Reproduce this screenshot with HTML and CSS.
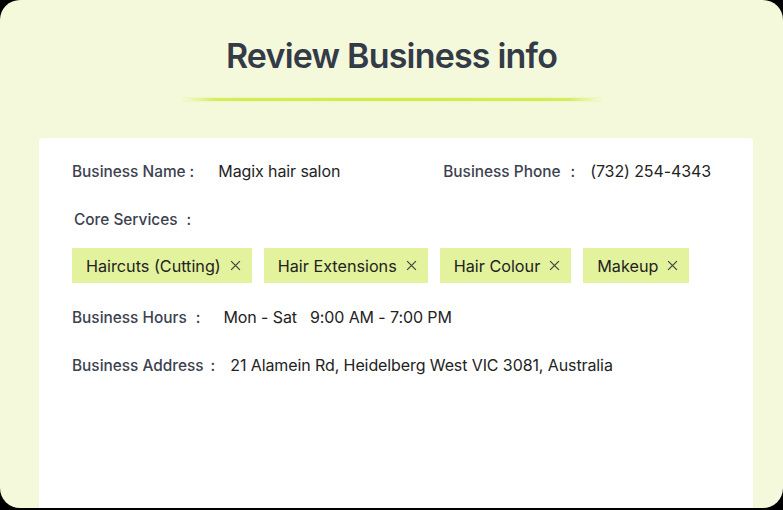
FILE: index.html
```html
<!DOCTYPE html>
<html lang="en">
<head>
<meta charset="utf-8">
<title>Review Business info</title>
<link rel="stylesheet" href="styles.css">
</head>
<body>
<div class="page">
  <h1 class="title">Review Business info</h1>
  <div class="underline"></div>
  <div class="card">
    <div class="row row-first">
      <div class="field field-name">
        <span class="label">Business Name</span><span class="colon colon-name">:</span><span class="value value-name">Magix hair salon</span>
      </div>
      <div class="field field-phone">
        <span class="label">Business Phone</span><span class="colon colon-phone">:</span><span class="value value-phone">(732) 254-4343</span>
      </div>
    </div>
    <div class="row row-services">
      <span class="label label-services">Core Services</span><span class="colon colon-services">:</span>
    </div>
    <div class="tags">
      <span class="tag">Haircuts (Cutting)<svg class="x" viewBox="0 0 10 10"><path d="M1 1L9 9M9 1L1 9"/></svg></span>
      <span class="tag">Hair Extensions<svg class="x" viewBox="0 0 10 10"><path d="M1 1L9 9M9 1L1 9"/></svg></span>
      <span class="tag">Hair Colour<svg class="x" viewBox="0 0 10 10"><path d="M1 1L9 9M9 1L1 9"/></svg></span>
      <span class="tag">Makeup<svg class="x" viewBox="0 0 10 10"><path d="M1 1L9 9M9 1L1 9"/></svg></span>
    </div>
    <div class="row row-hours">
      <span class="label">Business Hours</span><span class="colon colon-hours">:</span><span class="value value-hours">Mon - Sat<span class="time">9:00 AM - 7:00 PM</span></span>
    </div>
    <div class="row row-address">
      <span class="label">Business Address</span><span class="colon colon-address">:</span><span class="value value-address">21 Alamein Rd, Heidelberg West VIC 3081, Australia</span>
    </div>
  </div>
</div>
</body>
</html>
```
FILE: styles.css
```css
html, body {
  margin: 0;
  padding: 0;
  background: #000;
}
body {
  width: 783px;
  height: 510px;
  overflow: hidden;
  font-family: Inter, "Liberation Sans", sans-serif;
}
.page {
  width: 783px;
  height: 508px;
  background: #f4f9dc;
  border-radius: 20px;
  display: flex;
  flex-direction: column;
  align-items: center;
  overflow: hidden;
}
.title {
  margin: 34px 0 0;
  font-size: 34px;
  line-height: 44px;
  font-weight: 600;
  letter-spacing: -0.8px;
  color: #343b48;
}
.underline {
  margin-top: 20px;
  width: 418px;
  height: 3px;
  border-radius: 2px;
  background: linear-gradient(90deg, rgba(214,234,80,0) 0%, #d7eb5c 8%, #d4e94c 50%, #d7eb5c 92%, rgba(214,234,80,0) 100%);
  box-shadow: 0 0 2px rgba(214,234,80,0.6);
}
.card {
  margin-top: 37px;
  align-self: flex-start;
  margin-left: 39px;
  width: 714px;
  flex: 1;
  background: #fff;
  border-radius: 4px 4px 0 0;
  padding: 21px 0 0 33px;
  box-sizing: border-box;
}
.row {
  display: flex;
  align-items: center;
  height: 24px;
}
.field {
  display: flex;
  align-items: center;
}
.field-phone {
  margin-left: auto;
  margin-right: 42px;
}
.label {
  font-size: 15.4px;
  font-weight: 500;
  color: #3c4250;
}
.colon {
  font-size: 15.4px;
  font-weight: 500;
  color: #3c4250;
}
.value {
  font-size: 16px;
  color: #232323;
  letter-spacing: -0.1px;
}
.colon-name { margin-left: 4px; }
.value-name { margin-left: 24px; }
.colon-phone { margin-left: 10px; }
.value-phone { margin-left: 15px; }
.row-services { margin-top: 24px; padding-left: 2px; }
.colon-services { margin-left: 9px; }
.tags {
  margin-top: 17px;
  display: flex;
  gap: 12px;
}
.tag {
  display: inline-flex;
  align-items: center;
  height: 35px;
  padding: 0 11px 0 14px;
  background: #e3f29c;
  font-size: 16.2px;
  color: #222;
}
.x {
  width: 11px;
  height: 11px;
  margin-left: 9px;
  fill: none;
  stroke: #474747;
  stroke-width: 1.2;
}
.row-hours { margin-top: 22px; }
.colon-hours { margin-left: 9px; }
.value-hours { margin-left: 23px; }
.time { margin-left: 13px; }
.row-address { margin-top: 24px; }
.colon-address { margin-left: 7px; }
.value-address { margin-left: 15px; }
```
